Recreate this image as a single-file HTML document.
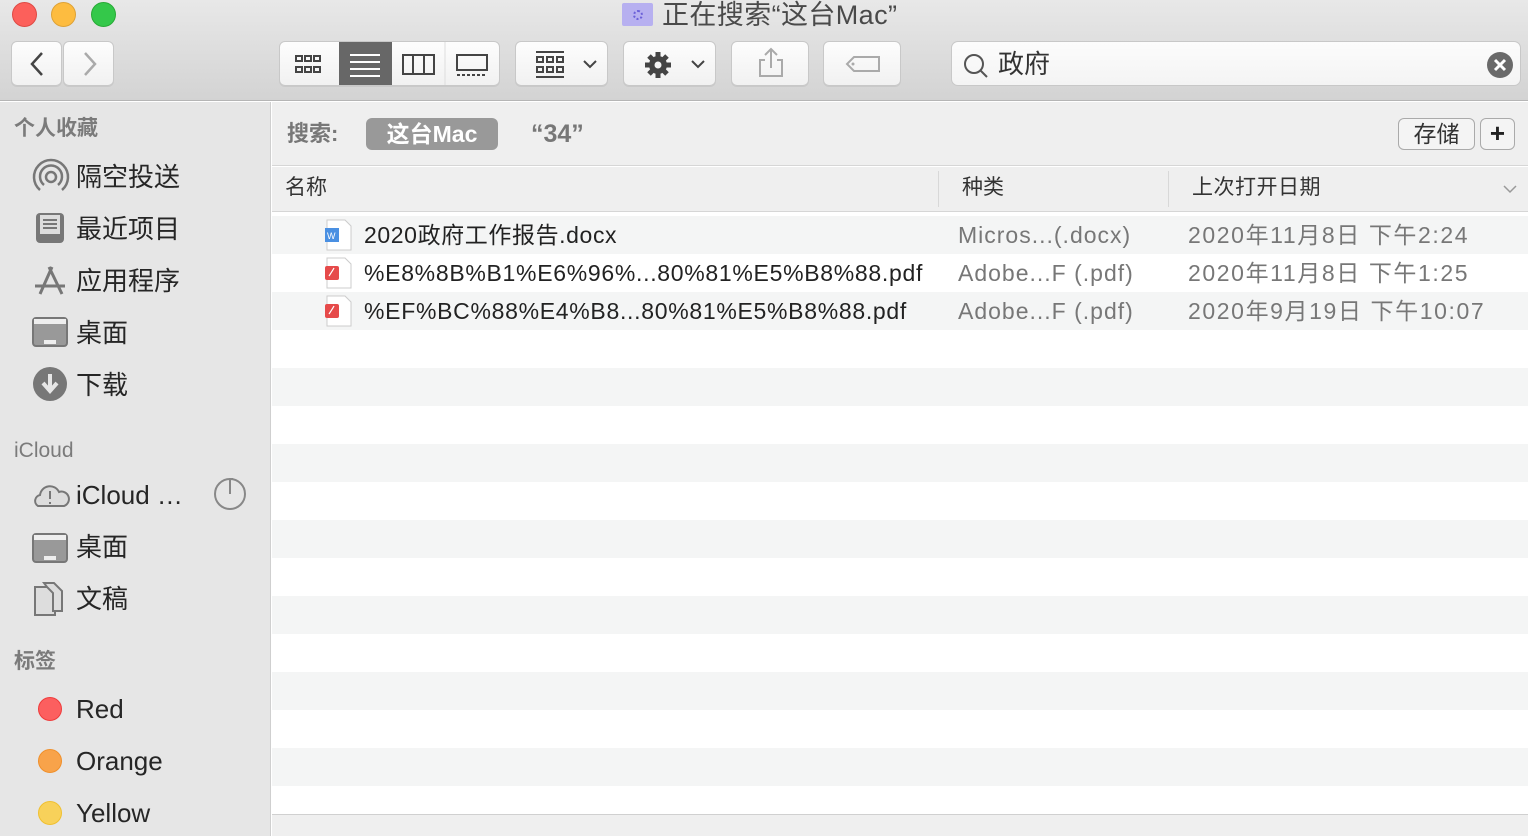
<!DOCTYPE html>
<html><head><meta charset="utf-8"><style>
*{margin:0;padding:0;box-sizing:border-box}
body{width:1528px;height:836px;overflow:hidden;position:relative;background:#fff;font-family:"Liberation Sans","Noto Sans CJK SC",sans-serif;color:#222}
.abs{position:absolute}
#tb{left:0;top:0;width:1528px;height:101px;background:linear-gradient(#e8e8e8,#d3d3d3);border-bottom:1px solid #b5b5b5}
.dot{width:25px;height:25px;border-radius:50%;top:2px}
.btn{background:linear-gradient(#fdfdfd,#f1f1f1);border:1px solid #c8c8c8;border-radius:6px;height:45px;top:41px;box-shadow:0 1px 0 rgba(0,0,0,.06)}
#sb{left:0;top:102px;width:271px;height:734px;background:#e6e6e6;border-right:1px solid #cfcfcf}
.sh{left:14px;font-size:21px;color:#7b7b7b;font-weight:bold;line-height:26px}
.si{left:76px;font-size:26px;color:#262626;line-height:34px}
.ic{left:32px}
.row{left:272px;width:1256px;height:38px}
.g{background:#f4f5f5}
.t{font-size:23px;white-space:nowrap;line-height:28px}
</style></head><body>
<div id="tb" class="abs"></div>
<div class="abs dot" style="left:12px;background:#fc605b;border:1px solid #de4a44"></div>
<div class="abs dot" style="left:51px;background:#fdbc40;border:1px solid #dea236"></div>
<div class="abs dot" style="left:91px;background:#34c84a;border:1px solid #27aa35"></div>
<div class="abs" style="left:622px;top:3px;width:31px;height:23px;background:#b7b0f0;border-radius:2px"><div style="margin:7px 0 0 11px;width:10px;height:10px;border:2px dotted #6a5fd8;border-radius:50%"></div></div>
<div class="abs" style="left:662px;top:0px;font-size:27px;line-height:30px;color:#4a4a4a;letter-spacing:0.4px">正在搜索“这台Mac”</div>
<div class="abs btn" style="left:11px;width:51px"><svg width="51" height="45"><path d="M30 11 L20 22 L30 33" stroke="#444" stroke-width="2.5" fill="none"/></svg></div>
<div class="abs btn" style="left:63px;width:51px"><svg width="51" height="45"><path d="M21 11 L31 22 L21 33" stroke="#aaa" stroke-width="2.5" fill="none"/></svg></div>
<div class="abs btn" style="left:279px;width:221px;overflow:hidden">
<svg width="221" height="45"><g fill="none" stroke="#444" stroke-width="2">
<rect x="16" y="14" width="6" height="5"/><rect x="25" y="14" width="6" height="5"/><rect x="34" y="14" width="6" height="5"/><rect x="16" y="25" width="6" height="5"/><rect x="25" y="25" width="6" height="5"/><rect x="34" y="25" width="6" height="5"/></g>
<rect x="59" y="-1" width="53" height="47" fill="#676767"/>
<g stroke="#fff" stroke-width="2"><path d="M70 13h30M70 20h30M70 27h30M70 34h30"/></g>
<g fill="none" stroke="#444" stroke-width="2"><rect x="123" y="13" width="31" height="19"/><path d="M133 13v19M144 13v19"/><rect x="177" y="13" width="30" height="15"/><path d="M177 33h30" stroke-dasharray="3 2"/></g>
<path d="M165 0v45" stroke="#ddd"/></svg></div>
<div class="abs btn" style="left:515px;width:93px"><svg width="93" height="45"><g fill="none" stroke="#444" stroke-width="2"><path d="M20 10h28M20 35h28"/><rect x="21" y="15" width="6" height="5"/><rect x="31" y="15" width="6" height="5"/><rect x="41" y="15" width="6" height="5"/><rect x="21" y="25" width="6" height="5"/><rect x="31" y="25" width="6" height="5"/><rect x="41" y="25" width="6" height="5"/><path d="M68 19l6 6 6-6"/></g></svg></div>
<div class="abs btn" style="left:623px;width:93px"><svg width="93" height="45"><g transform="translate(34 23)"><circle r="9" fill="#444"/><g stroke="#444" stroke-width="5"><path d="M0 -13V13M-13 0H13M-9 -9L9 9M-9 9L9 -9"/></g><circle r="3.5" fill="#f5f5f5"/></g><path d="M68 19l6 6 6-6" fill="none" stroke="#444" stroke-width="2"/></svg></div>
<div class="abs btn" style="left:731px;width:78px"><svg width="78" height="45"><g fill="none" stroke="#aaa" stroke-width="2"><path d="M33 18h-5v16h22v-16h-5M39 8v18M33 13l6-6 6 6"/></g></svg></div>
<div class="abs btn" style="left:823px;width:78px"><svg width="78" height="45"><path d="M30 15h25v14h-25l-7-7z" fill="none" stroke="#aaa" stroke-width="2"/><circle cx="29" cy="22" r="1.5" fill="#aaa"/></svg></div>
<div class="abs" style="left:951px;top:41px;width:570px;height:45px;background:linear-gradient(#fcfcfc,#f4f4f4);border:1px solid #c8c8c8;border-radius:7px">
<svg class="abs" style="left:10px;top:10px" width="28" height="28"><circle cx="12" cy="12" r="9" fill="none" stroke="#555" stroke-width="2"/><path d="M18 18l7 7" stroke="#555" stroke-width="2"/></svg>
<div class="abs" style="left:46px;top:5px;font-size:26px;line-height:34px;color:#333">政府</div>
<svg class="abs" style="left:534px;top:9px" width="28" height="28"><circle cx="14" cy="14" r="13" fill="#6a6a6a"/><path d="M9 9l10 10M19 9l-10 10" stroke="#fff" stroke-width="3"/></svg></div>
<div id="sb" class="abs"></div>
<div class="abs sh" style="top:116px">个人收藏</div>
<svg class="abs ic" style="top:158px" width="38" height="38"><g fill="none" stroke="#777" stroke-width="2.5"><path d="M8 32A17 17 0 1 1 30 32"/><path d="M12 27A11 11 0 1 1 26 27"/><circle cx="19" cy="19" r="5"/></g></svg>
<div class="abs si" style="top:160px">隔空投送</div>
<svg class="abs ic" style="top:210px" width="38" height="38"><rect x="4" y="3" width="28" height="30" rx="4" fill="#777"/><rect x="8" y="5" width="20" height="19" fill="#ddd"/><path d="M11 10h14M11 14h14M11 18h14" stroke="#777" stroke-width="2"/></svg>
<div class="abs si" style="top:212px">最近项目</div>
<svg class="abs ic" style="top:262px" width="38" height="38"><g stroke="#777" stroke-width="3" fill="none"><path d="M20 5L8 32M17 5l13 27M3 24h30"/></g></svg>
<div class="abs si" style="top:264px">应用程序</div>
<svg class="abs ic" style="top:314px" width="38" height="38"><rect x="1" y="4" width="34" height="28" rx="3" fill="#999" stroke="#777" stroke-width="2"/><rect x="2" y="5" width="32" height="5" fill="#eee"/><rect x="12" y="26" width="12" height="4" fill="#eee"/></svg>
<div class="abs si" style="top:316px">桌面</div>
<svg class="abs ic" style="top:366px" width="38" height="38"><circle cx="18" cy="18" r="17" fill="#777"/><path d="M18 8v16M11 17l7 8 7-8" stroke="#e6e6e6" stroke-width="4" fill="none"/></svg>
<div class="abs si" style="top:368px">下载</div>
<div class="abs sh" style="top:438px;font-weight:normal">iCloud</div>
<svg class="abs ic" style="top:478px" width="38" height="38"><path d="M6 28a6 6 0 0 1 2-11a10 10 0 0 1 19-3a7 7 0 0 1 5 14z" fill="#ddd" stroke="#777" stroke-width="2"/><path d="M18 13v8M18 24v2" stroke="#777" stroke-width="2"/></svg>
<div class="abs si" style="top:478px">iCloud …</div>
<svg class="abs" style="left:213px;top:477px" width="34" height="34"><circle cx="17" cy="17" r="15" fill="none" stroke="#888" stroke-width="2"/><path d="M17 17V2l3 0" stroke="#888" stroke-width="2" fill="none"/></svg>
<svg class="abs ic" style="top:530px" width="38" height="38"><rect x="1" y="4" width="34" height="28" rx="3" fill="#999" stroke="#777" stroke-width="2"/><rect x="2" y="5" width="32" height="5" fill="#eee"/><rect x="12" y="26" width="12" height="4" fill="#eee"/></svg>
<div class="abs si" style="top:530px">桌面</div>
<svg class="abs ic" style="top:582px" width="38" height="38"><g fill="#ddd" stroke="#777" stroke-width="2"><path d="M3 5h14l6 6v22H3z"/><path d="M12 1h10l8 8v20H21V11l-6-6z"/></g></svg>
<div class="abs si" style="top:582px">文稿</div>
<div class="abs sh" style="top:649px">标签</div>
<div class="abs" style="left:38px;top:697px;width:24px;height:24px;border-radius:50%;background:#fc5f5f;border:1px solid #ef3b3b"></div>
<div class="abs si" style="top:692px">Red</div>
<div class="abs" style="left:38px;top:749px;width:24px;height:24px;border-radius:50%;background:#f8a34a;border:1px solid #f0902c"></div>
<div class="abs si" style="top:744px">Orange</div>
<div class="abs" style="left:38px;top:801px;width:24px;height:24px;border-radius:50%;background:#f8d15a;border:1px solid #f0c030"></div>
<div class="abs si" style="top:796px">Yellow</div>
<div class="abs" style="left:272px;top:102px;width:1256px;height:64px;background:#efefef;border-bottom:1px solid #d6d6d6"></div>
<div class="abs" style="left:287px;top:120px;font-size:22px;line-height:28px;color:#777;font-weight:bold">搜索:</div>
<div class="abs" style="left:366px;top:118px;width:132px;height:32px;border-radius:6px;background:#999;color:#fff;font-weight:bold;font-size:23px;text-align:center;line-height:32px">这台Mac</div>
<div class="abs" style="left:531px;top:119px;font-size:25px;line-height:30px;color:#777;font-weight:bold">“34”</div>
<div class="abs" style="left:1398px;top:118px;width:77px;height:32px;border:1px solid #aaa;border-radius:6px;font-size:23px;text-align:center;line-height:30px;color:#333;background:#f4f4f4">存储</div>
<div class="abs" style="left:1480px;top:118px;width:35px;height:32px;border:1px solid #aaa;border-radius:6px;font-size:26px;text-align:center;line-height:28px;font-weight:bold;background:#f4f4f4">+</div>
<div class="abs" style="left:272px;top:167px;width:1256px;height:45px;background:#efefef;border-bottom:1px solid #d6d6d6"></div>
<div class="abs" style="left:285px;top:174px;font-size:21px;line-height:28px;color:#333">名称</div>
<div class="abs" style="left:938px;top:171px;width:1px;height:36px;background:#d8d8d8"></div>
<div class="abs" style="left:962px;top:174px;font-size:21px;line-height:28px;color:#333">种类</div>
<div class="abs" style="left:1168px;top:171px;width:1px;height:36px;background:#d8d8d8"></div>
<div class="abs" style="left:1192px;top:174px;font-size:21px;line-height:28px;color:#333;letter-spacing:0.5px">上次打开日期</div>
<svg class="abs" style="left:1502px;top:183px" width="16" height="12"><path d="M2 3l6 6 6-6" stroke="#999" stroke-width="1.5" fill="none"/></svg>
<div class="abs" style="left:272px;top:212px;width:1256px;height:4px;background:#fff"></div>
<div class="abs row g" style="top:216px"></div><div class="abs row" style="top:254px"></div><div class="abs row g" style="top:292px"></div><div class="abs row" style="top:330px"></div>
<div class="abs row g" style="top:368px"></div><div class="abs row" style="top:406px"></div><div class="abs row g" style="top:444px"></div><div class="abs row" style="top:482px"></div>
<div class="abs row g" style="top:520px"></div><div class="abs row" style="top:558px"></div><div class="abs row g" style="top:596px"></div><div class="abs row" style="top:634px"></div>
<div class="abs row g" style="top:672px"></div><div class="abs row" style="top:710px"></div><div class="abs row g" style="top:748px"></div><div class="abs row" style="top:786px;height:28px"></div>
<div class="abs" style="left:272px;top:814px;width:1256px;height:22px;background:#efefef;border-top:1px solid #d0d0d0"></div>
<svg class="abs" style="left:324px;top:219px" width="30" height="32"><path d="M3 1h18l6 6v24H3z" fill="#fff" stroke="#ccc"/><rect x="1" y="9" width="14" height="14" fill="#4a90e2"/><text x="3" y="20" font-size="9" fill="#fff" font-family="Liberation Sans">W</text></svg>
<svg class="abs" style="left:324px;top:257px" width="30" height="32"><path d="M3 1h18l6 6v24H3z" fill="#fff" stroke="#ccc"/><rect x="1" y="9" width="14" height="14" rx="2" fill="#e64a4a"/><path d="M5 19c2-3 4-6 5-8" stroke="#fff" stroke-width="1.2" fill="none"/></svg>
<svg class="abs" style="left:324px;top:295px" width="30" height="32"><path d="M3 1h18l6 6v24H3z" fill="#fff" stroke="#ccc"/><rect x="1" y="9" width="14" height="14" rx="2" fill="#e64a4a"/><path d="M5 19c2-3 4-6 5-8" stroke="#fff" stroke-width="1.2" fill="none"/></svg>
<div class="abs t" style="left:364px;top:221px;letter-spacing:0.6px">2020政府工作报告.docx</div>
<div class="abs t" style="left:364px;top:259px;letter-spacing:0.7px">%E8%8B%B1%E6%96%...80%81%E5%B8%88.pdf</div>
<div class="abs t" style="left:364px;top:297px;letter-spacing:0.7px">%EF%BC%88%E4%B8...80%81%E5%B8%88.pdf</div>
<div class="abs t" style="left:958px;top:221px;color:#777;letter-spacing:1px">Micros...(.docx)</div>
<div class="abs t" style="left:958px;top:259px;color:#777;letter-spacing:1px">Adobe...F (.pdf)</div>
<div class="abs t" style="left:958px;top:297px;color:#777;letter-spacing:1px">Adobe...F (.pdf)</div>
<div class="abs t" style="left:1188px;top:221px;color:#777;letter-spacing:1.6px">2020年11月8日 下午2:24</div>
<div class="abs t" style="left:1188px;top:259px;color:#777;letter-spacing:1.6px">2020年11月8日 下午1:25</div>
<div class="abs t" style="left:1188px;top:297px;color:#777;letter-spacing:1.6px">2020年9月19日 下午10:07</div>
</body></html>
